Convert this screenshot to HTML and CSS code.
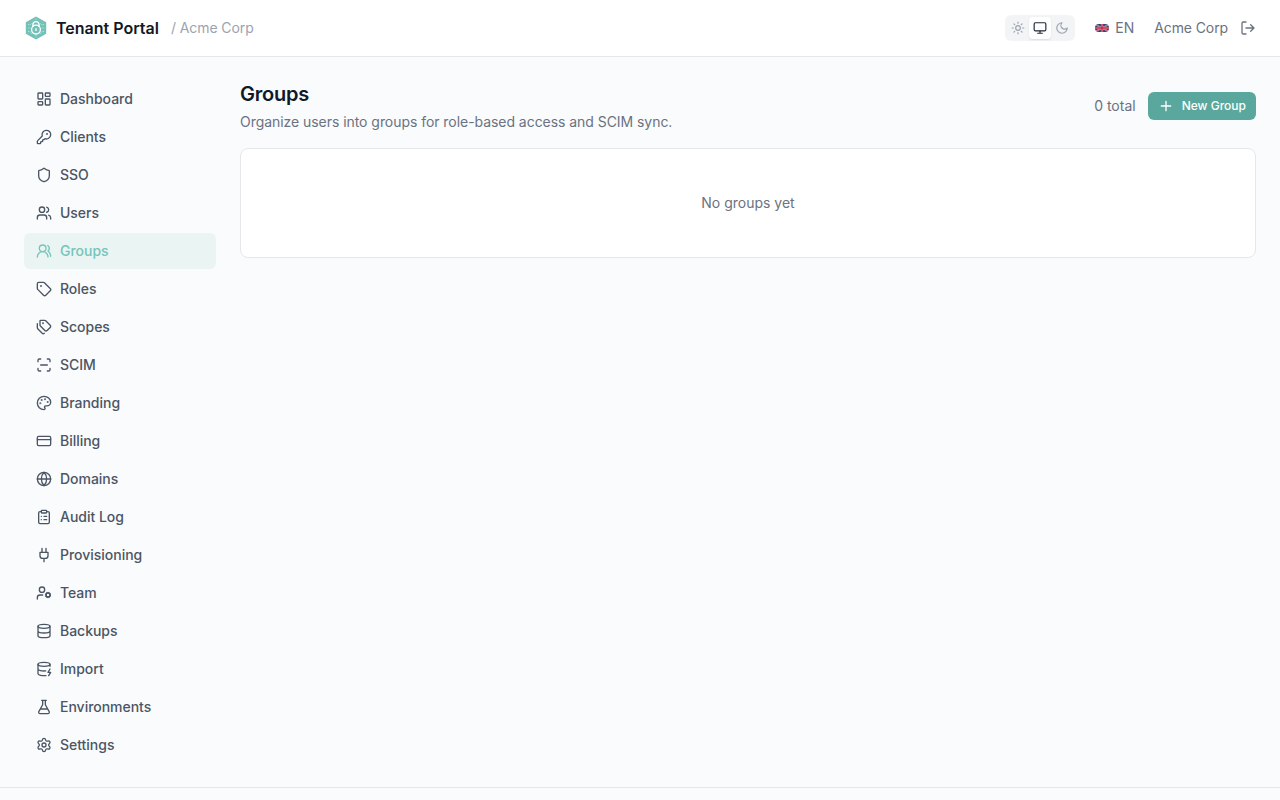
FILE: index.html
```html
<!DOCTYPE html>
<html lang="en">
<head>
    <meta charset="UTF-8">
    <meta name="viewport" content="width=device-width, initial-scale=1.0">
    <title>Groups - Tenant Portal</title>
    <link rel="stylesheet" href="styles.css">
</head>
<body>
    <header class="header">
        <a class="brand" href="#">
            <svg class="logo" viewBox="0 0 24 24">
                <path d="M12 .4 22.2 6.200v11.600L12 23.600 1.800 17.800V6.200z" fill="#74c1b7"/>
                <g fill="none" stroke="#fff" stroke-width="1.3">
                    <path d="M8.900 11V8.700a3.100 3.100 0 0 1 6.200 0V11"/>
                    <circle cx="12" cy="13.600" r="4.400"/>
                    <path d="M12 12.300v2.800"/>
                </g>
                <g fill="none" stroke="#fff" stroke-width=".7" opacity=".65">
                    <path d="M4 8.500h2.500L8 7M4 12h2.500M4 15.500h2l2 2.500M20 8.500h-2.500L16 7M20 12h-2.500M20 15.500h-2l-2 2.500M12 19v2.500M12 2.500v1.800" stroke-dasharray="1.400 .7"/>
                </g>
            </svg>
            <span class="brand-name">Tenant Portal</span>
        </a>
        <span class="tenant">/ Acme Corp</span>

        <div class="header-right">
            <div class="theme-switch">
                <button class="theme-btn" aria-label="Light">
                    <svg class="icon icon-sm" viewBox="0 0 24 24"><circle cx="12" cy="12" r="4"/><path d="M12 2v2M12 20v2M4.930 4.930l1.410 1.410M17.660 17.660l1.410 1.410M2 12h2M20 12h2M6.340 17.660l-1.410 1.410M19.070 4.930l-1.410 1.410"/></svg>
                </button>
                <button class="theme-btn active" aria-label="System">
                    <svg class="icon icon-sm" viewBox="0 0 24 24"><rect x="2" y="3" width="20" height="14" rx="2"/><path d="M8 21h8M12 17v4"/></svg>
                </button>
                <button class="theme-btn" aria-label="Dark">
                    <svg class="icon icon-sm" viewBox="0 0 24 24"><path d="M12 3a6 6 0 0 0 9 9 9 9 0 1 1-9-9Z"/></svg>
                </button>
            </div>
            <button class="lang">
                <svg class="flag" viewBox="0 0 14 8">
                    <rect width="14" height="8" fill="#34406f"/>
                    <path d="M1 .8l12 6.400M13 .8 1 7.200" stroke="#d9c5d2" stroke-width="1.400"/>
                    <path d="M1 .8l12 6.400M13 .8 1 7.200" stroke="#b8304f" stroke-width=".7"/>
                    <path d="M7 0v8M0 4h14" stroke="#ecdce3" stroke-width="2.200"/>
                    <path d="M7 0v8M0 4h14" stroke="#c01f40" stroke-width="1.400"/>
                </svg>
                <span>EN</span>
            </button>
            <span class="account">Acme Corp</span>
            <button class="logout" aria-label="Sign out">
                <svg class="icon" viewBox="0 0 24 24"><path d="M9 21H5a2 2 0 0 1-2-2V5a2 2 0 0 1 2-2h4M16 17l5-5-5-5M21 12H9"/></svg>
            </button>
        </div>
    </header>

    <div class="layout">
        <nav class="sidebar">
            <a class="nav-item" href="#">
                <svg class="icon" viewBox="0 0 24 24"><rect x="3" y="3" width="7" height="9" rx="1"/><rect x="14" y="3" width="7" height="5" rx="1"/><rect x="14" y="12" width="7" height="9" rx="1"/><rect x="3" y="16" width="7" height="5" rx="1"/></svg>
                Dashboard
            </a>
            <a class="nav-item" href="#">
                <svg class="icon" viewBox="0 0 24 24"><path d="M2.586 17.414A2 2 0 0 0 2 18.828V21a1 1 0 0 0 1 1h3a1 1 0 0 0 1-1v-1a1 1 0 0 1 1-1h1a1 1 0 0 0 1-1v-1a1 1 0 0 1 1-1h.172a2 2 0 0 0 1.414-.586l.814-.814a6.500 6.500 0 1 0-4-4z"/><circle cx="16.500" cy="7.500" r=".5" fill="currentColor"/></svg>
                Clients
            </a>
            <a class="nav-item" href="#">
                <svg class="icon" viewBox="0 0 24 24"><path d="M20 13c0 5-3.500 7.500-7.660 8.950a1 1 0 0 1-.67-.010C7.500 20.500 4 18 4 13V6a1 1 0 0 1 1-1c2 0 4.500-1.200 6.240-2.720a1.170 1.170 0 0 1 1.520 0C14.510 3.810 17 5 19 5a1 1 0 0 1 1 1z"/></svg>
                SSO
            </a>
            <a class="nav-item" href="#">
                <svg class="icon" viewBox="0 0 24 24"><path d="M16 21v-2a4 4 0 0 0-4-4H6a4 4 0 0 0-4 4v2"/><circle cx="9" cy="7" r="4"/><path d="M22 21v-2a4 4 0 0 0-3-3.870M16 3.130a4 4 0 0 1 0 7.750"/></svg>
                Users
            </a>
            <a class="nav-item active" href="#">
                <svg class="icon" viewBox="0 0 24 24"><path d="M18 21a8 8 0 0 0-16 0"/><circle cx="10" cy="8" r="5"/><path d="M22 20c0-3.370-2-6.500-4-8a5 5 0 0 0-.450-8.300"/></svg>
                Groups
            </a>
            <a class="nav-item" href="#">
                <svg class="icon" viewBox="0 0 24 24"><path d="M12.586 2.586A2 2 0 0 0 11.172 2H4a2 2 0 0 0-2 2v7.172a2 2 0 0 0 .586 1.414l8.704 8.704a2.426 2.426 0 0 0 3.420 0l6.580-6.580a2.426 2.426 0 0 0 0-3.420z"/><circle cx="7.500" cy="7.500" r=".5" fill="currentColor"/></svg>
                Roles
            </a>
            <a class="nav-item" href="#">
                <svg class="icon" viewBox="0 0 24 24"><path d="M13.172 2a2 2 0 0 1 1.414.586l6.710 6.710a2.400 2.400 0 0 1 0 3.408l-4.592 4.592a2.400 2.400 0 0 1-3.408 0l-6.710-6.710A2 2 0 0 1 6 9.172V3a1 1 0 0 1 1-1z"/><path d="M2 7v6.172a2 2 0 0 0 .586 1.414l6.710 6.710a2.400 2.400 0 0 0 3.191.193"/><circle cx="10.500" cy="6.500" r=".5" fill="currentColor"/></svg>
                Scopes
            </a>
            <a class="nav-item" href="#">
                <svg class="icon" viewBox="0 0 24 24"><path d="M3 7V5a2 2 0 0 1 2-2h2M17 3h2a2 2 0 0 1 2 2v2M21 17v2a2 2 0 0 1-2 2h-2M7 21H5a2 2 0 0 1-2-2v-2M7 12h10"/></svg>
                SCIM
            </a>
            <a class="nav-item" href="#">
                <svg class="icon" viewBox="0 0 24 24"><g fill="currentColor"><circle cx="13.500" cy="6.500" r=".5"/><circle cx="17.500" cy="10.500" r=".5"/><circle cx="8.500" cy="7.500" r=".5"/><circle cx="6.500" cy="12.500" r=".5"/></g><path d="M12 2C6.500 2 2 6.500 2 12s4.500 10 10 10c.926 0 1.648-.746 1.648-1.688 0-.437-.180-.835-.437-1.125-.290-.289-.438-.652-.438-1.125a1.640 1.640 0 0 1 1.668-1.668h1.996c3.051 0 5.555-2.503 5.555-5.554C21.965 6.012 17.461 2 12 2z"/></svg>
                Branding
            </a>
            <a class="nav-item" href="#">
                <svg class="icon" viewBox="0 0 24 24"><rect x="2" y="5" width="20" height="14" rx="2"/><path d="M2 10h20"/></svg>
                Billing
            </a>
            <a class="nav-item" href="#">
                <svg class="icon" viewBox="0 0 24 24"><circle cx="12" cy="12" r="10"/><path d="M12 2a14.500 14.500 0 0 0 0 20 14.500 14.500 0 0 0 0-20M2 12h20"/></svg>
                Domains
            </a>
            <a class="nav-item" href="#">
                <svg class="icon" viewBox="0 0 24 24"><rect x="8" y="2" width="8" height="4" rx="1"/><path d="M16 4h2a2 2 0 0 1 2 2v14a2 2 0 0 1-2 2H6a2 2 0 0 1-2-2V6a2 2 0 0 1 2-2h2M12 11h4M12 16h4M8 11h.010M8 16h.010"/></svg>
                Audit Log
            </a>
            <a class="nav-item" href="#">
                <svg class="icon" viewBox="0 0 24 24"><path d="M12 22v-5M9 8V2M15 8V2M18 8v5a4 4 0 0 1-4 4h-4a4 4 0 0 1-4-4V8Z"/></svg>
                Provisioning
            </a>
            <a class="nav-item" href="#">
                <svg class="icon" viewBox="0 0 24 24"><circle cx="18" cy="15" r="3"/><circle cx="9" cy="7" r="4"/><path d="M10 15H6a4 4 0 0 0-4 4v2M21.700 16.400l-.9-.3M15.200 13.900l-.9-.3M16.600 18.700l.3-.9M19.100 12.200l.3-.9M19.600 18.700l-.4-1M16.800 12.300l-.4-1M14.300 16.600l1-.4M20.700 13.800l1-.4"/></svg>
                Team
            </a>
            <a class="nav-item" href="#">
                <svg class="icon" viewBox="0 0 24 24"><ellipse cx="12" cy="5" rx="9" ry="3"/><path d="M3 5v14a9 3 0 0 0 18 0V5M3 12a9 3 0 0 0 18 0"/></svg>
                Backups
            </a>
            <a class="nav-item" href="#">
                <svg class="icon" viewBox="0 0 24 24"><ellipse cx="12" cy="5" rx="9" ry="3"/><path d="M3 5v14a9 3 0 0 0 12 2.840M21 5v3M21 12l-3 5h4l-3 5M3 12a9 3 0 0 0 11.590 2.870"/></svg>
                Import
            </a>
            <a class="nav-item" href="#">
                <svg class="icon" viewBox="0 0 24 24"><path d="M14 2v6a2 2 0 0 0 .245.960l5.510 10.080A2 2 0 0 1 18 22H6a2 2 0 0 1-1.755-2.960l5.510-10.080A2 2 0 0 0 10 8V2M6.453 15h11.094M8.500 2h7"/></svg>
                Environments
            </a>
            <a class="nav-item" href="#">
                <svg class="icon" viewBox="0 0 24 24"><path d="M9.671 4.136a2.340 2.340 0 0 1 4.659 0 2.340 2.340 0 0 0 3.319 1.915 2.340 2.340 0 0 1 2.330 4.033 2.340 2.340 0 0 0 0 3.831 2.340 2.340 0 0 1-2.330 4.033 2.340 2.340 0 0 0-3.319 1.915 2.340 2.340 0 0 1-4.659 0 2.340 2.340 0 0 0-3.320-1.915 2.340 2.340 0 0 1-2.330-4.033 2.340 2.340 0 0 0 0-3.831A2.340 2.340 0 0 1 6.350 6.051a2.340 2.340 0 0 0 3.319-1.915"/><circle cx="12" cy="12" r="3"/></svg>
                Settings
            </a>
        </nav>

        <main class="content">
            <div class="page-header">
                <div>
                    <h1>Groups</h1>
                    <p class="subtitle">Organize users into groups for role-based access and SCIM sync.</p>
                </div>
                <div class="actions">
                    <span class="total">0 total</span>
                    <button class="btn">
                        <svg class="icon" viewBox="0 0 24 24"><path d="M5 12h14M12 5v14"/></svg>
                        New Group
                    </button>
                </div>
            </div>
            <div class="card">No groups yet</div>
        </main>
    </div>

    <footer class="footer"></footer>
</body>
</html>
```
FILE: styles.css
```css
* { box-sizing: border-box; }
body { margin: 0; height: 100vh; overflow: hidden; background: #f9fbfd; color: #4b5563; font-family: Inter, sans-serif; font-size: 14px; line-height: 20px; }
a { color: inherit; text-decoration: none; }
button { display: flex; align-items: center; padding: 0; border: none; background: none; color: inherit; font: inherit; cursor: pointer; }
h1, p { margin: 0; }

.icon { width: 16px; height: 16px; flex-shrink: 0; fill: none; stroke: currentColor; stroke-width: 2; stroke-linecap: round; stroke-linejoin: round; }
.icon-sm { width: 14px; height: 14px; }

/* Header */
.header { display: flex; align-items: center; height: 57px; padding: 0 24px; background: #fff; border-bottom: 1px solid #e5e7eb; }
.brand { display: flex; align-items: center; gap: 8px; }
.logo { width: 24px; height: 24px; }
.brand-name { font-size: 16px; font-weight: 600; line-height: 24px; color: #111827; }
.tenant { margin-left: 12px; color: #9ca3af; letter-spacing: -0.08px; }
.header-right { display: flex; align-items: center; margin-left: auto; color: #6b7280; }
.theme-switch { display: flex; padding: 2px; border-radius: 6px; background: #f3f4f6; }
.theme-btn { justify-content: center; width: 22px; height: 22px; border-radius: 4px; color: #9ca3af; }
.theme-btn.active { background: #fff; color: #1f2937; box-shadow: 0 1px 2px rgba(0,0,0,0.1); }
.lang { gap: 6px; margin-left: 20px; }
.flag { width: 14px; height: 8px; border-radius: 4px; }
.account { margin-left: 20px; letter-spacing: -0.1px; }
.logout { margin-left: 12px; }

/* Sidebar */
.layout { display: flex; gap: 24px; padding: 24px; }
.sidebar { display: flex; flex-direction: column; gap: 2px; width: 192px; flex-shrink: 0; }
.nav-item { display: flex; align-items: center; gap: 8px; height: 36px; padding: 0 12px; border-radius: 6px; font-weight: 500; letter-spacing: -0.02px; }
.nav-item.active { background: #e9f4f3; color: #76c5ba; }

/* Content */
.content { flex: 1; }
.page-header { display: flex; align-items: flex-start; justify-content: space-between; margin-bottom: 16px; }
h1 { font-size: 20px; font-weight: 600; line-height: 26px; letter-spacing: -0.25px; color: #111827; }
.subtitle { margin-top: 5px; color: #6b7280; letter-spacing: -0.05px; }
.actions { display: flex; align-items: center; gap: 12px; padding-top: 11px; color: #6b7280; }
.btn { gap: 8px; height: 28px; padding: 0 10px; border-radius: 6px; background: #5aa89d; color: #fff; font-size: 12px; font-weight: 500; }
.card { display: flex; align-items: center; justify-content: center; height: 110px; background: #fff; border: 1px solid #e5e7eb; border-radius: 8px; color: #6b7280; }

.footer { height: 40px; border-top: 1px solid #e5e7eb; }
```
